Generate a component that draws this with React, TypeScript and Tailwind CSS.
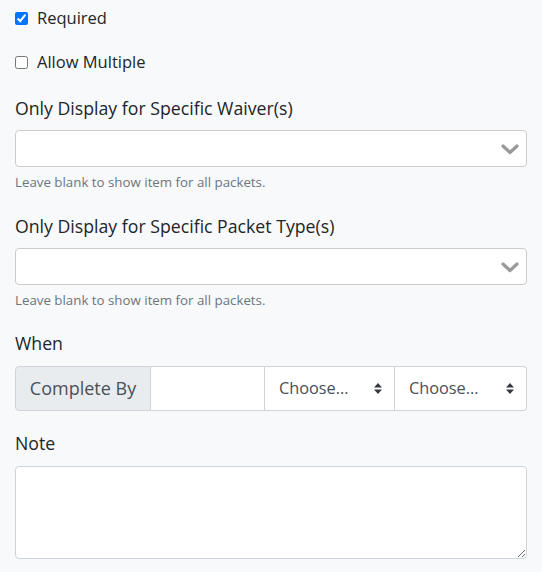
import React from 'react';

const Chevron: React.FC = () => (
    <svg width="18" height="12" viewBox="0 0 18 12" className="shrink-0">
        <polyline points="2,3 9,9.5 16,3" fill="none" stroke="#999" strokeWidth="3.2" strokeLinecap="round" strokeLinejoin="round" />
    </svg>
);

const UpDown: React.FC = () => (
    <svg width="8" height="11" viewBox="0 0 8 11" className="shrink-0">
        <path d="M4 0 L8 4.5 L0 4.5 Z" fill="#343a40" />
        <path d="M4 11 L8 6.5 L0 6.5 Z" fill="#343a40" />
    </svg>
);

const MultiSelect: React.FC = () => (
    <div className="flex items-center justify-end h-[37px] bg-white border border-[#cccccc] rounded-[4px] pr-[7px]">
        <Chevron />
    </div>
);

const Help: React.FC = () => (
    <p className="mt-[6px] text-[13.3px] leading-[19px] text-[#6c757d]">Leave blank to show item for all packets.</p>
);

export default function App() {
    return (
        <div className="min-h-[572px] bg-[#f8f9fa] text-[#212529] px-[15px] pt-[6px]" style={{ fontFamily: '"Open Sans", "Noto Sans", sans-serif' }}>
            <label className="flex items-center h-[24px] text-[16.5px]">
                <input type="checkbox" defaultChecked className="m-0 mr-[9px] w-[13px] h-[13px]" />
                Required
            </label>
            <label className="flex items-center h-[24px] mt-[20px] text-[16.5px]">
                <input type="checkbox" className="m-0 mr-[9px] w-[13px] h-[13px]" />
                Allow Multiple
            </label>

            <div className="mt-[22px]">
                <div className="text-[17.7px] leading-[24px] mb-[10px]">Only Display for Specific Waiver(s)</div>
                <MultiSelect />
                <Help />
            </div>

            <div className="mt-[22px]">
                <div className="text-[17.7px] leading-[24px] mb-[10px]">Only Display for Specific Packet Type(s)</div>
                <MultiSelect />
                <Help />
            </div>

            <div className="mt-[21px]">
                <div className="text-[17.7px] leading-[24px] mb-[11px]">When</div>
                <div className="flex h-[45px] text-[16.3px]">
                    <div className="w-[136px] shrink-0 flex items-center justify-center whitespace-nowrap bg-[#e9ecef] border border-[#ced4da] rounded-l-[4px] text-[#495057] text-[18px]">Complete By</div>
                    <input type="text" className="w-[113px] min-w-0 shrink-0 bg-white border-y border-[#ced4da] outline-none" />
                    <div className="w-[131px] shrink-0 flex items-center justify-between pl-[14px] pr-[12px] bg-white border border-[#ced4da] text-[#495057]">
                        <span>Choose...</span>
                        <UpDown />
                    </div>
                    <div className="flex-1 flex items-center justify-between pl-[14px] pr-[12px] bg-white border-y border-r border-[#ced4da] rounded-r-[4px] text-[#495057]">
                        <span>Choose...</span>
                        <UpDown />
                    </div>
                </div>
            </div>

            <div className="mt-[20px]">
                <div className="text-[17.7px] leading-[24px] mb-[11px]">Note</div>
                <textarea className="block w-full h-[93px] bg-white border border-[#ced4da] rounded-[4px] outline-none" />
            </div>
        </div>
    );
}
